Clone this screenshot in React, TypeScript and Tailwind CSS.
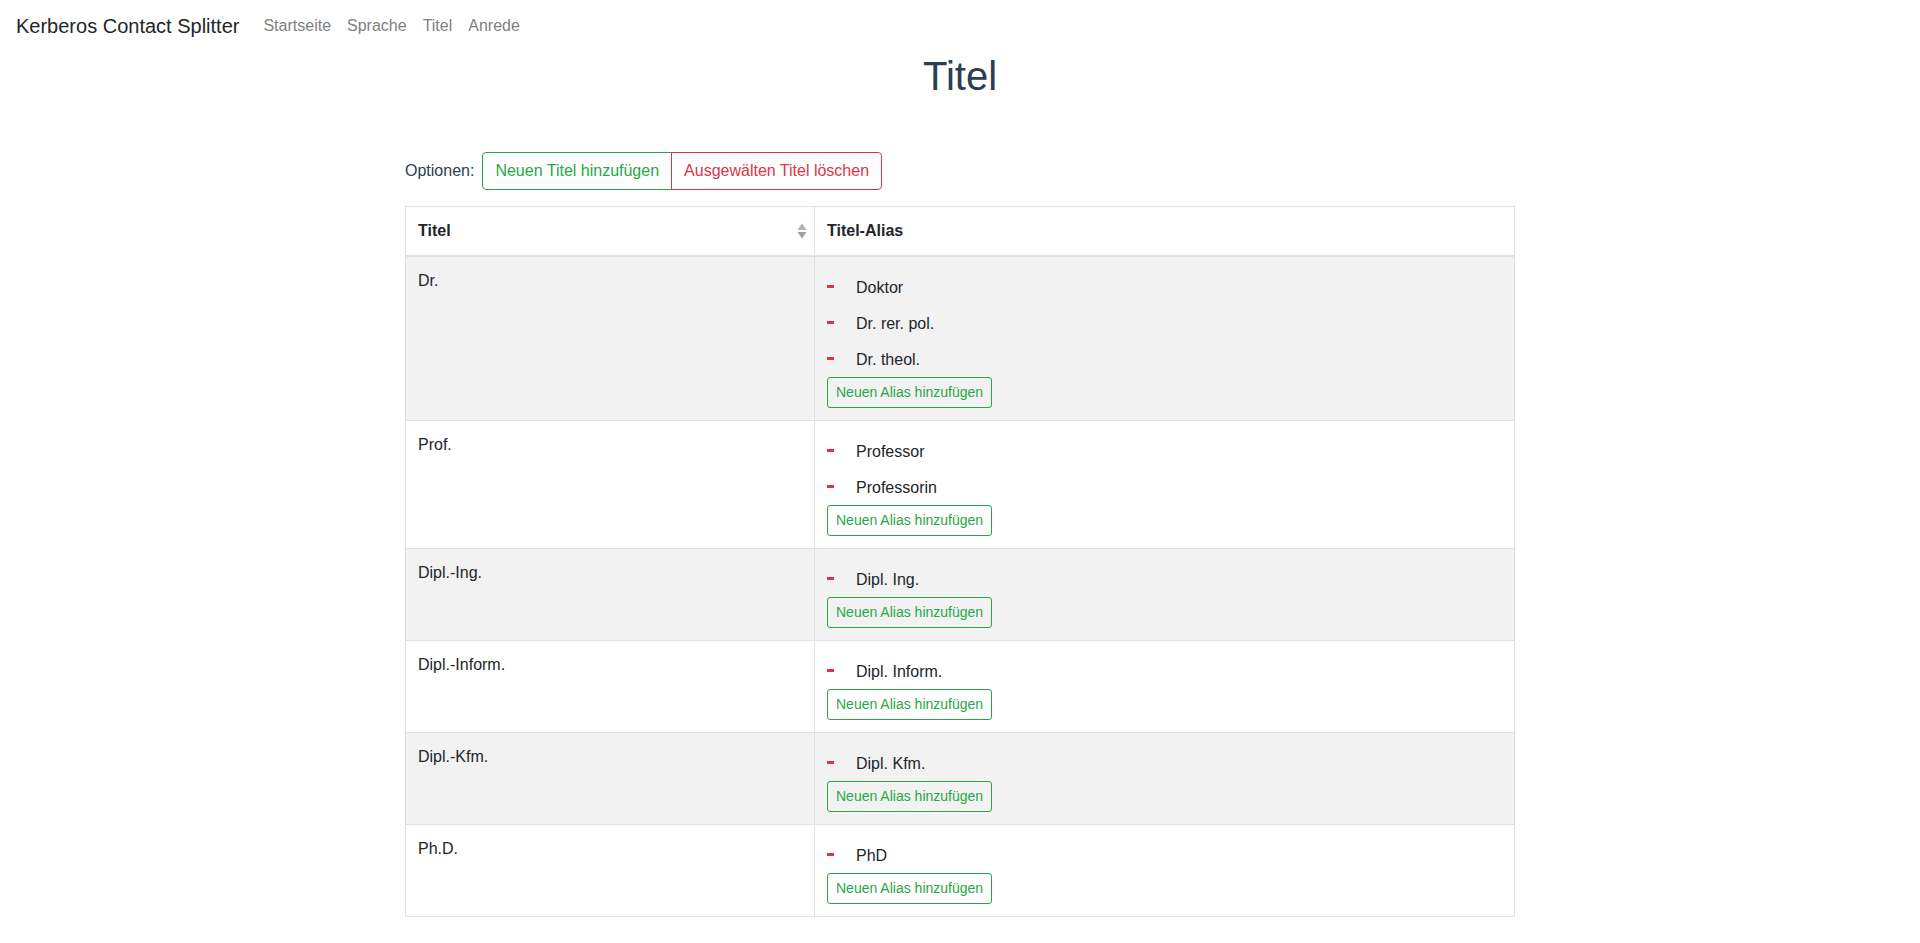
import React from 'react';

interface TitleRow {
    title: string;
    aliases: string[];
}

const rows: TitleRow[] = [
    { title: 'Dr.', aliases: ['Doktor', 'Dr. rer. pol.', 'Dr. theol.'] },
    { title: 'Prof.', aliases: ['Professor', 'Professorin'] },
    { title: 'Dipl.-Ing.', aliases: ['Dipl. Ing.'] },
    { title: 'Dipl.-Inform.', aliases: ['Dipl. Inform.'] },
    { title: 'Dipl.-Kfm.', aliases: ['Dipl. Kfm.'] },
    { title: 'Ph.D.', aliases: ['PhD'] },
];

const SortIcon = () => (
    <svg width="10" height="16" viewBox="0 0 10 16" className="absolute right-[7px] top-1/2 -translate-y-1/2">
        <polygon points="5,0.5 9.5,7 0.5,7" fill="#b0b0b0" />
        <polygon points="0.5,9 9.5,9 5,15.5" fill="#a0a0a0" />
    </svg>
);

const AliasCell: React.FC<{ aliases: string[] }> = ({ aliases }) => (
    <div className="flex flex-col items-start">
        {aliases.map((a) => (
            <div key={a} className="flex items-center h-9 pt-[1px]">
                <span className="block w-[7px] h-[3px] bg-[#dc3545] -mt-[3px]" />
                <span className="ml-[22px] text-base leading-6 text-[#212529]">{a}</span>
            </div>
        ))}
        <button className="border border-[#28a745] text-[#28a745] text-sm leading-[21px] px-2 py-1 rounded-[3px] bg-transparent">
            Neuen Alias hinzufügen
        </button>
    </div>
);

export default function App() {
    return (
        <div className="min-h-screen bg-white font-['Liberation_Sans',Arial,sans-serif] text-[#2c3e50]">
            <nav className="flex items-center px-4 py-[6px]">
                <span className="py-[5px] text-xl leading-[30px] text-[#212529] mr-4">Kerberos Contact Splitter</span>
                <div className="flex items-center">
                    {['Startseite', 'Sprache', 'Titel', 'Anrede'].map((l) => (
                        <span key={l} className="px-2 py-2 text-base leading-6 text-[#808080]">{l}</span>
                    ))}
                </div>
            </nav>

            <h1 className="text-center text-[40px] leading-[48px] font-normal text-[#2c3e50] mb-[52px]">Titel</h1>

            <div className="w-[1140px] mx-auto px-[15px]">
                <div className="flex items-center">
                    <span className="text-base leading-6 mr-2 text-[#2c3e50]">Optionen:</span>
                    <div className="flex">
                        <button className="border border-[#28a745] text-[#28a745] text-base leading-6 px-3 py-[6px] rounded-l-[4px] bg-transparent">
                            Neuen Titel hinzufügen
                        </button>
                        <button className="border border-[#dc3545] text-[#dc3545] text-base leading-6 px-3 py-[6px] rounded-r-[4px] -ml-px bg-transparent">
                            Ausgewälten Titel löschen
                        </button>
                    </div>
                </div>

                <table className="w-full table-fixed border-collapse mt-4 mb-4 text-[#212529] text-base leading-6">
                    <colgroup>
                        <col className="w-[409px]" />
                        <col />
                    </colgroup>
                    <thead>
                        <tr className="bg-white">
                            <th className="relative text-left font-bold border border-[#dee2e6] border-b-2 p-3 pr-6">
                                Titel
                                <SortIcon />
                            </th>
                            <th className="text-left font-bold border border-[#dee2e6] border-b-2 p-3">Titel-Alias</th>
                        </tr>
                    </thead>
                    <tbody>
                        {rows.map((r, i) => (
                            <tr key={r.title} className={i % 2 === 0 ? 'bg-[#f2f2f2]' : 'bg-white'}>
                                <td className="align-top border border-[#dee2e6] p-3">{r.title}</td>
                                <td className="align-top border border-[#dee2e6] p-3">
                                    <AliasCell aliases={r.aliases} />
                                </td>
                            </tr>
                        ))}
                    </tbody>
                </table>
            </div>
        </div>
    );
}
